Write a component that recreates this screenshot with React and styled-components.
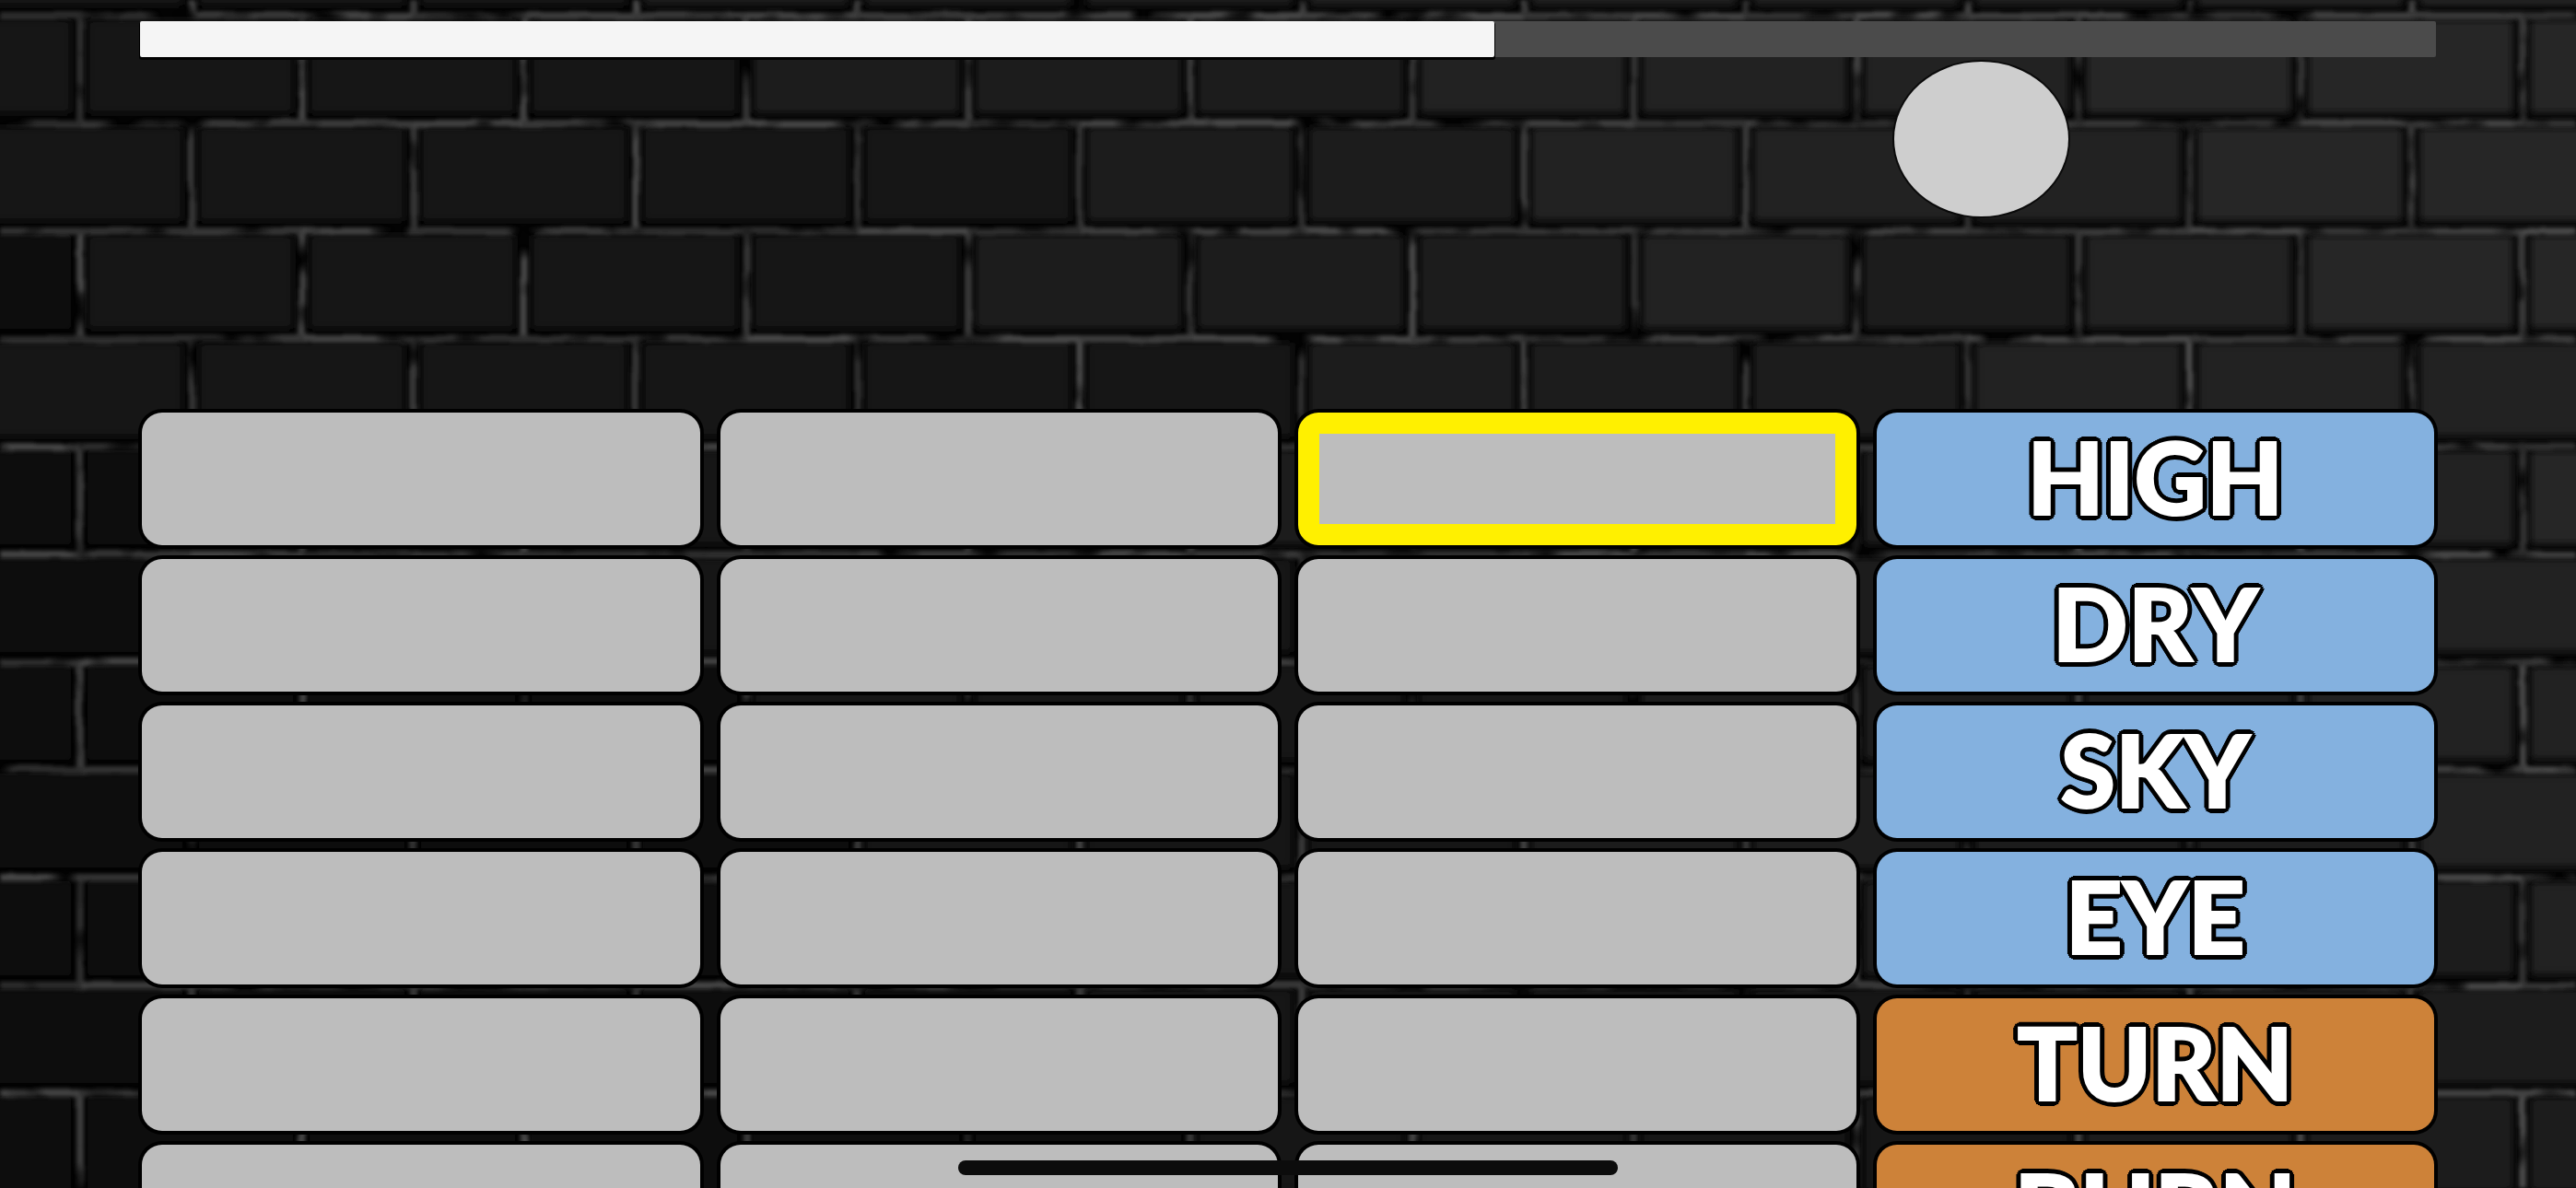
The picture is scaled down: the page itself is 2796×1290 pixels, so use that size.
import styled, { createGlobalStyle } from "styled-components"

const ROW_HEIGHT = 117;
const BRICK_WIDTH = 241;
const WALL_WIDTH = 2796;
const WALL_HEIGHT = 1290;

const rows = [
    { word: "HIGH", color: "#84b1df", activeSlot: 2 },
    { word: "DRY", color: "#84b1df" },
    { word: "SKY", color: "#84b1df" },
    { word: "EYE", color: "#84b1df" },
    { word: "TURN", color: "#cd8239" },
    { word: "BURN", color: "#cd8239" },
];

// repeatable pseudo random value between 0 and 1
const noise = (a, b) => {
    const n = Math.sin(a * 127.1 + b * 311.7) * 43758.5453;
    return n - Math.floor(n);
}

const getBricks = () => {
    const bricks = [];
    for (let row = 0; row < 12; row++) {
        const start = row % 2 === 0 ? 208 - BRICK_WIDTH : 87 - BRICK_WIDTH;
        for (let col = 0; col < 13; col++) {
            const x = start + col * BRICK_WIDTH;
            const y = 17 + (row - 1) * ROW_HEIGHT;
            const light = 18 + (21 * x) / WALL_WIDTH - (12 * y) / WALL_HEIGHT + noise(row, col) * 4;
            bricks.push({ id: `${row}-${col}`, row, col, x, y, light: Math.max(10, Math.round(light)) });
        }
    }
    return bricks;
}

const bricks = getBricks();

const BrickWall = () => {
    return (
        <StyledWall viewBox={`0 0 ${WALL_WIDTH} ${WALL_HEIGHT}`} preserveAspectRatio="xMidYMid slice" aria-hidden="true">
            <defs>
                <filter id="soft" x="-10%" y="-10%" width="120%" height="120%">
                    <feGaussianBlur stdDeviation="5" />
                </filter>
                <filter id="rough" filterUnits="userSpaceOnUse" x="0" y="0" width={WALL_WIDTH} height={WALL_HEIGHT}>
                    <feTurbulence type="fractalNoise" baseFrequency="0.02" numOctaves="2" seed="4" result="grain" />
                    <feDisplacementMap in="SourceGraphic" in2="grain" scale="5" xChannelSelector="R" yChannelSelector="G" result="bent" />
                    <feColorMatrix in="grain" type="matrix" values="0 0 0 0 0  0 0 0 0 0  0 0 0 0 0  0 0 4 0 -1" result="mask" />
                    <feComposite in="bent" in2="mask" operator="in" />
                    <feGaussianBlur stdDeviation="2" />
                </filter>
            </defs>
            <rect width={WALL_WIDTH} height={WALL_HEIGHT} fill="#030303" />
            <g>
                {bricks.map(({ id, x, y, light }) => (
                    <rect
                        key={id}
                        x={x + 8}
                        y={y + 4}
                        width={BRICK_WIDTH - 18}
                        height={ROW_HEIGHT - 15}
                        rx="4"
                        fill={`rgb(${light}, ${light}, ${light})`}
                        filter="url(#soft)"
                    />
                ))}
            </g>
            <g filter="url(#rough)" fill="none" strokeWidth="8">
                {bricks.map(({ id, row, col, x, y }) => (
                    <g key={id} stroke="#484848">
                        <path d={`M${x} ${y}h${BRICK_WIDTH / 2}`} opacity={0.55 + noise(col, row) * 0.45} />
                        <path d={`M${x + BRICK_WIDTH / 2} ${y}h${BRICK_WIDTH / 2}`} opacity={0.55 + noise(col + 40, row) * 0.45} />
                        <path d={`M${x} ${y + 4}v${ROW_HEIGHT - 8}`} opacity={0.6 + noise(row + 20, col) * 0.4} />
                    </g>
                ))}
            </g>
        </StyledWall>
    )
}

const App = () => {
    return (
        <>
            <GlobalStyle />
            <StyledPage>
                <BrickWall />
                <StyledContent>
                    <StyledTrack role="progressbar" aria-label="Progress" aria-valuemin={0} aria-valuemax={100} aria-valuenow={59}>
                        <StyledFill />
                    </StyledTrack>
                    <StyledMarkerRow>
                        <StyledMarker />
                    </StyledMarkerRow>
                    <StyledBoard>
                        {rows.map(({ word, color, activeSlot }) => (
                            <StyledRow key={word}>
                                {[0, 1, 2].map(slot => (
                                    <StyledTile key={slot} type="button" aria-label={`Slot ${slot + 1}`} $active={slot === activeSlot} />
                                ))}
                                <StyledTile type="button" $color={color}>
                                    <StyledWord>{word}</StyledWord>
                                </StyledTile>
                            </StyledRow>
                        ))}
                    </StyledBoard>
                </StyledContent>
                <StyledHomeBar />
            </StyledPage>
        </>
    )
}

const GlobalStyle = createGlobalStyle`
    *{
        box-sizing: border-box;
    }
    body{
        margin: 0;
        background-color: #0c0c0c;
        font-family: Lato, "Liberation Sans", sans-serif;
    }
`

const StyledPage = styled.main`
    position: relative;
    height: 100vh;
    overflow: hidden;
`

const StyledWall = styled.svg`
    position: absolute;
    inset: 0;
    width: 100%;
    height: 100%;
`

const StyledContent = styled.div`
    position: relative;
    display: flex;
    flex-direction: column;
    padding: 23px 152px 0;
`

const StyledTrack = styled.div`
    height: 39px;
    background-color: #4b4b4b;
    border-radius: 2px;
`

const StyledFill = styled.div`
    width: 59%;
    height: 100%;
    background-color: #f5f5f5;
    border-radius: 2px;
    box-shadow: 0 2px 0 1px #000;
`

const StyledMarkerRow = styled.div`
    display: flex;
    justify-content: flex-end;
    padding: 5px 16% 0 0;
    margin-bottom: 213px;
`

const StyledMarker = styled.div`
    width: 189px;
    height: 168px;
    border-radius: 50%;
    background-color: #cecece;
    box-shadow: 0 0 0 2px #0a0a0a;
`

const StyledBoard = styled.div`
    display: flex;
    flex-direction: column;
    gap: 15px;
    padding: 0 2px;
`

const StyledRow = styled.div`
    display: grid;
    grid-template-columns: repeat(4, 1fr);
    gap: 22px;
`

const StyledTile = styled.button`
    display: flex;
    align-items: center;
    justify-content: center;
    min-width: 0;
    height: 144px;
    padding: 0 0 6px;
    border: ${({ $active }) => $active ? "23px solid #fff000" : "none"};
    border-radius: 22px;
    background-color: ${({ $color }) => $color || "#bdbdbd"};
    box-shadow: 0 0 0 4px #000;
    font-family: inherit;
`

const StyledWord = styled.span`
    color: #fff;
    font-size: 108px;
    font-weight: 900;
    font-kerning: none;
    line-height: 120px;
    -webkit-text-stroke: 2px #fff;
    text-shadow:
        6px 0 #000, -6px 0 #000, 0 6px #000, 0 -6px #000,
        4px 4px #000, -4px 4px #000, 4px -4px #000, -4px -4px #000,
        5px 2px #000, -5px 2px #000, 5px -2px #000, -5px -2px #000,
        2px 5px #000, -2px 5px #000, 2px -5px #000, -2px -5px #000;
`

const StyledHomeBar = styled.div`
    position: absolute;
    bottom: 14px;
    left: 50%;
    width: 716px;
    height: 16px;
    border-radius: 8px;
    background-color: #0c0c0c;
    transform: translateX(-50%);
`

export default App
